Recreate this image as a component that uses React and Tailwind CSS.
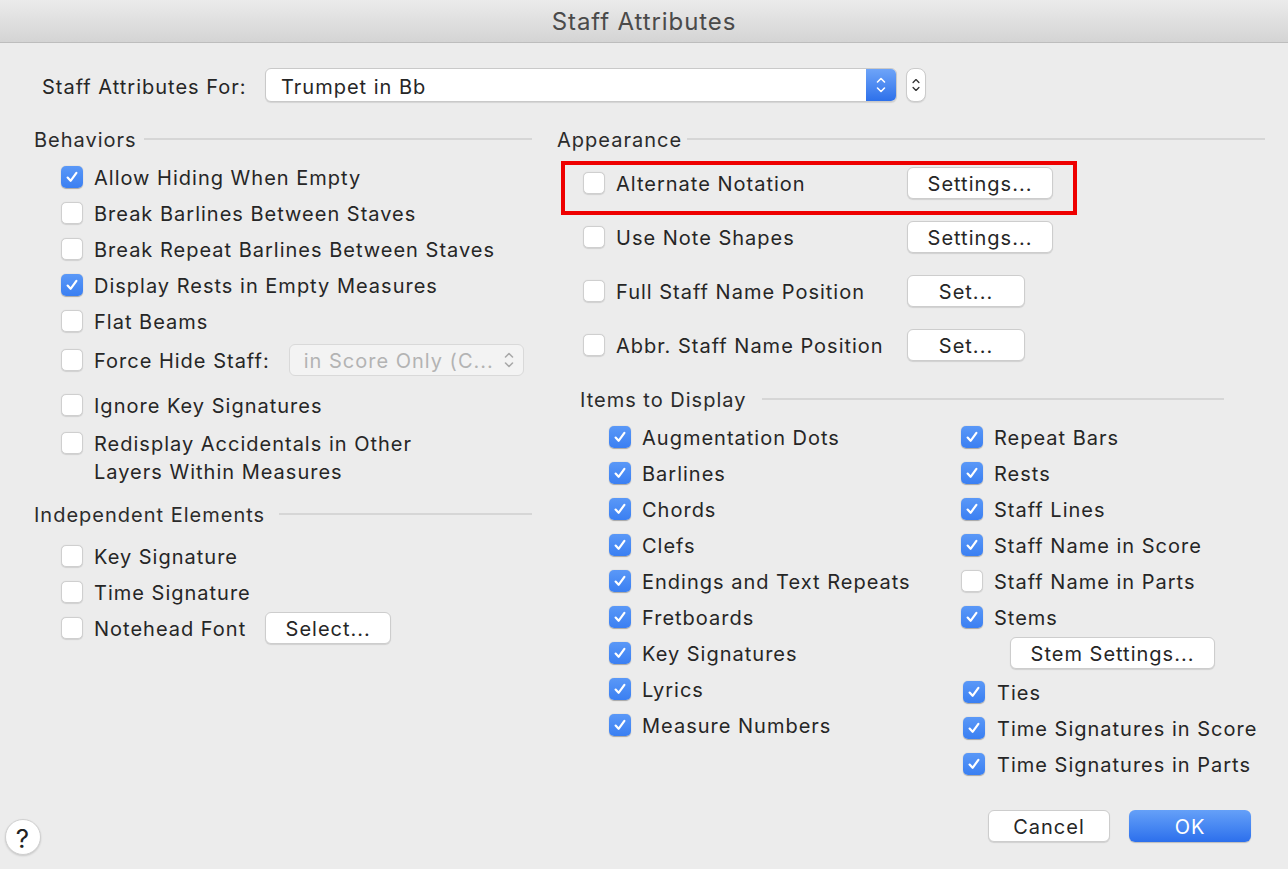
import React from 'react';

const font = { fontFamily: 'Inter, "Liberation Sans", sans-serif' };

const Check = ({ checked }) =>
    checked ? (
        <div className="flex h-[22px] w-[22px] shrink-0 items-center justify-center rounded-[5px] bg-gradient-to-b from-[#5a98f7] to-[#3a7ff2] shadow-[0_0.5px_1px_rgba(0,0,0,0.3)]">
            <svg width="14" height="14" viewBox="0 0 14 14" fill="none">
                <path d="M2.6 7.6 L5.6 10.8 L11.4 2.8" stroke="white" strokeWidth="2.2" strokeLinecap="round" strokeLinejoin="round" />
            </svg>
        </div>
    ) : (
        <div className="h-[22px] w-[22px] shrink-0 rounded-[5px] border border-[#cfcfcf] bg-white shadow-[0_0.5px_1px_rgba(0,0,0,0.12)]" />
    );

const Button = ({ children, className = '' }) => (
    <button
        className={`flex h-8 items-center justify-center rounded-[6px] border border-[#cdcdcd] bg-white pt-[2px] text-[20px] tracking-[1px] text-[#262626] shadow-[0_1px_1px_rgba(0,0,0,0.12)] ${className}`}
    >
        {children}
    </button>
);

const Item = ({ checked, label, gap = 'gap-[11px]', className = '' }) => (
    <div className={`flex h-9 items-center ${gap} ${className}`}>
        <Check checked={checked} />
        <span className="pt-[2px]">{label}</span>
    </div>
);

// section title with the rule running to a fixed right edge
const Header = ({ title, gap, className = '' }) => (
    <div className={`flex h-7 items-center ${className}`}>
        <span className="pt-[2px] text-[20px] text-[#2b2b2b]">{title}</span>
        <span className={`h-[2px] flex-1 bg-[#d6d6d6] ${gap}`} />
    </div>
);

const Chevrons = ({ color = '#ffffff', w = 12, h = 20 }) => (
    <svg width={w} height={h} viewBox="0 0 12 20" fill="none">
        <path d="M2.5 7 L6 3.5 L9.5 7" stroke={color} strokeWidth="1.6" strokeLinecap="round" strokeLinejoin="round" />
        <path d="M2.5 13 L6 16.5 L9.5 13" stroke={color} strokeWidth="1.6" strokeLinecap="round" strokeLinejoin="round" />
    </svg>
);

const itemsLeft = [
    'Augmentation Dots',
    'Barlines',
    'Chords',
    'Clefs',
    'Endings and Text Repeats',
    'Fretboards',
    'Key Signatures',
    'Lyrics',
    'Measure Numbers',
];

const itemsRight = [
    ['Repeat Bars', true],
    ['Rests', true],
    ['Staff Lines', true],
    ['Staff Name in Score', true],
    ['Staff Name in Parts', false],
    ['Stems', true],
];

export default function App() {
    return (
        <div className="flex h-[869px] w-[1288px] flex-col bg-[#ececec] text-[20px] tracking-[1px] text-[#262626]" style={font}>
            {/* Title bar */}
            <div className="flex h-[43px] shrink-0 items-center justify-center border-b border-[#bdbdbd] bg-gradient-to-b from-[#ebebeb] to-[#d4d4d4]">
                <span className="pt-[1px] text-[24px] tracking-[0.9px] text-[#4a4a4a]">Staff Attributes</span>
            </div>

            {/* Staff selector */}
            <div className="mt-[25px] flex h-[34px] items-center pl-[42px]">
                <span className="mt-[3px] w-[223px]">Staff Attributes For:</span>
                <div className="flex h-[34px] w-[632px] items-stretch overflow-hidden rounded-[6px] border border-[#c9c9c9] bg-white shadow-[0_1px_1px_rgba(0,0,0,0.1)]">
                    <span className="flex flex-1 items-center pl-[15px] pt-[3px]">Trumpet in Bb</span>
                    <span className="flex w-[30px] items-center justify-center bg-gradient-to-b from-[#6ea4f8] to-[#2d70ea]">
                        <Chevrons />
                    </span>
                </div>
                <div className="ml-[9px] flex h-[34px] w-[20px] items-center justify-center rounded-[8px] border border-[#cbcbcb] bg-white shadow-[0_1px_1px_rgba(0,0,0,0.1)]">
                    <Chevrons color="#333333" w={10} h={22} />
                </div>
            </div>

            {/* Columns */}
            <div className="mt-[23px] flex">
                {/* Left column */}
                <div className="ml-[34px] flex w-[498px] flex-col">
                    <Header title="Behaviors" gap="ml-[7px]" />
                    <div className="mt-[6px] flex flex-col pl-[27px]">
                        <Item checked label="Allow Hiding When Empty" />
                        <Item label="Break Barlines Between Staves" />
                        <Item label="Break Repeat Barlines Between Staves" />
                        <Item checked label="Display Rests in Empty Measures" />
                        <Item label="Flat Beams" />
                        <div className="flex h-[42px] items-center gap-[11px]">
                            <Check />
                            <span className="pt-[2px]">Force Hide Staff:</span>
                            <div className="ml-[8px] flex h-[32px] w-[235px] items-center justify-between rounded-[6px] border border-[#d9d9d9] bg-[#f3f3f3] pl-[14px] pr-[8px] text-[#b3b3b3]">
                                <span className="pt-[2px]">in Score Only (C...</span>
                                <Chevrons color="#a9a9a9" />
                            </div>
                        </div>
                        <Item label="Ignore Key Signatures" className="mt-[6px]" />
                        <div className="mt-[6px] flex items-start gap-[11px]">
                            <div className="mt-[3px]">
                                <Check />
                            </div>
                            <span className="pt-[1px] leading-[28px]">
                                Redisplay Accidentals in Other
                                <br />
                                Layers Within Measures
                            </span>
                        </div>
                    </div>

                    <Header title="Independent Elements" gap="ml-[14px]" className="mt-[14px]" />
                    <div className="mt-[10px] flex flex-col pl-[27px]">
                        <Item label="Key Signature" />
                        <Item label="Time Signature" />
                        <div className="flex h-9 items-center gap-[11px]">
                            <Check />
                            <span className="pt-[2px]">Notehead Font</span>
                            <Button className="ml-[8px] w-[126px]">Select...</Button>
                        </div>
                    </div>
                </div>

                {/* Right column */}
                <div className="ml-[25px] flex w-[708px] flex-col">
                    <Header title="Appearance" gap="ml-[5px]" />
                    <div className="mt-[3px] flex flex-col pl-[26px]">
                        {[
                            ['Alternate Notation', 'Settings...', 'w-[146px]'],
                            ['Use Note Shapes', 'Settings...', 'w-[146px]'],
                            ['Full Staff Name Position', 'Set...', 'w-[118px]'],
                            ['Abbr. Staff Name Position', 'Set...', 'w-[118px]'],
                        ].map(([label, btn, w], i) => (
                            <div key={label} className="relative flex h-[54px] items-center">
                                <Check />
                                <span className="ml-[11px] w-[291px] pt-[2px]">{label}</span>
                                <Button className={w}>{btn}</Button>
                                {i === 0 && (
                                    <span className="pointer-events-none absolute left-[-22px] top-[5px] h-[54px] w-[516px] border-4 border-[#ee0000]" />
                                )}
                            </div>
                        ))}
                    </div>

                    <Header title="Items to Display" gap="ml-[16px]" className="ml-[23px] mr-[41px] mt-[13px]" />
                    <div className="mt-[6px] flex pl-[52px]">
                        <div className="flex w-[352px] flex-col">
                            {itemsLeft.map((label) => (
                                <Item key={label} checked label={label} />
                            ))}
                        </div>
                        <div className="flex flex-col">
                            {itemsRight.map(([label, checked]) => (
                                <Item key={label} checked={checked} label={label} />
                            ))}
                            <div className="flex h-9 items-center pl-[49px]">
                                <Button className="w-[205px]">Stem Settings...</Button>
                            </div>
                            <div className="mt-[3px] flex flex-col pl-[2px]">
                                <Item checked label="Ties" gap="gap-[12px]" />
                                <Item checked label="Time Signatures in Score" gap="gap-[12px]" />
                                <Item checked label="Time Signatures in Parts" gap="gap-[12px]" />
                            </div>
                        </div>
                    </div>
                </div>
            </div>

            {/* Footer */}
            <div className="mt-auto mb-[14px] flex items-end justify-between pl-[5px] pr-[37px]">
                <button className="flex h-9 w-9 items-center justify-center rounded-full border border-[#d0d0d0] bg-white pt-[2px] text-[26px] text-[#222222] shadow-[0_1px_2px_rgba(0,0,0,0.15)]">
                    ?
                </button>
                <div className="mb-[13px] flex gap-[19px]">
                    <Button className="w-[122px]">Cancel</Button>
                    <button className="flex h-8 w-[122px] items-center justify-center rounded-[6px] bg-gradient-to-b from-[#65a0f8] to-[#2c6fec] pt-[2px] text-[20px] tracking-[1px] text-white shadow-[0_1px_1px_rgba(0,0,0,0.2)]">
                        OK
                    </button>
                </div>
            </div>
        </div>
    );
}
